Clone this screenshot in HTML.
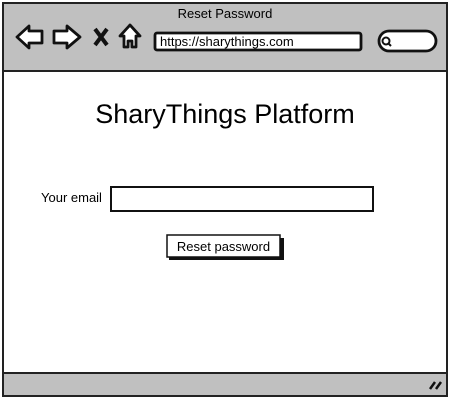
<!DOCTYPE html>
<html><head><style>
*{margin:0;padding:0;box-sizing:border-box}
body{width:450px;height:400px;background:#fff;position:relative;font-family:"Liberation Sans",sans-serif;color:#000;overflow:hidden}
.abs{position:absolute}
</style></head><body>
<div class="abs" style="left:2px;top:2px;width:446px;height:395px;border:2px solid #222;background:#fff"></div>
<div class="abs" style="left:2px;top:2px;width:446px;height:70px;background:#c0c0c0;border:2px solid #222"></div>
<div class="abs" style="left:2px;top:372px;width:446px;height:25px;background:#c0c0c0;border:2px solid #222"></div>
<div class="abs" style="left:0;top:6px;width:450px;text-align:center;font-size:13px">Reset Password</div>
<svg class="abs" style="left:0;top:0" width="450" height="400">
<g fill="#fff" stroke="#111" stroke-width="2.8" stroke-linejoin="round">
<path d="M17 37 L29 26 L29 31 L42 31 L42 43 L29 43 L29 48 Z"/>
<path d="M80 37 L67 26 L67 31 L54 31 L54 43 L67 43 L67 48 Z"/>
<path d="M120 36 L130 25 L140 36 L136 36 L136 47 L132 47 L132 41 L128 41 L128 47 L124 47 L124 36 Z"/>
<rect x="155" y="33" width="206" height="17" rx="2"/>
<rect x="379" y="31" width="57" height="20" rx="10"/>
</g>
<path d="M95 29 L107 45 M107 29 L95 45" stroke="#111" stroke-width="4"/>
<circle cx="386" cy="41" r="3.5" fill="none" stroke="#111" stroke-width="2"/>
<path d="M388 43 L391 46" stroke="#111" stroke-width="2"/>
<rect x="111" y="187" width="262" height="24" fill="#fff" stroke="#111" stroke-width="2"/>
<rect x="169" y="238" width="115" height="22" fill="#111"/>
<rect x="167" y="235" width="113" height="22" fill="#fff" stroke="#111" stroke-width="1.5"/>
<path d="M430 389 L435 382 M436 389 L441 382" stroke="#111" stroke-width="2.5"/>
</svg>
<div class="abs" style="left:160px;top:34px;font-size:13px">https://sharythings.com</div>
<div class="abs" style="left:0;top:99px;width:450px;text-align:center;font-size:27px">SharyThings Platform</div>
<div class="abs" style="left:41px;top:190px;font-size:13px">Your email</div>
<div class="abs" style="left:167px;top:239px;width:113px;text-align:center;font-size:13px">Reset password</div>
</body></html>
